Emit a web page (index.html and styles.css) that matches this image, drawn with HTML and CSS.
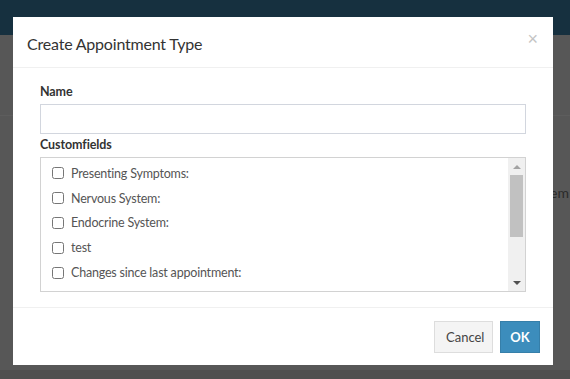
FILE: index.html
```html
<!DOCTYPE html>
<html>

	<head>
		<meta charset="UTF-8">
		<title>Appointment Types</title>
		<link rel="stylesheet" href="styles.css">
	</head>

	<body>
		<div class="page">
			<div class="topbar"></div>
			<div class="page-content">
				<div class="page-line"></div>
				<div class="page-row">Item</div>
			</div>
			<div class="page-foot"></div>
		</div>

		<div class="modal">
			<div class="modal-header">
				<h4>Create Appointment Type</h4>
				<span class="close">&times;</span>
			</div>
			<div class="modal-body">
				<label class="label">Name</label>
				<input type="text" class="input" />
				<label class="label">Customfields</label>
				<div class="list">
					<div class="items">
						<label class="item"><input type="checkbox" /> Presenting Symptoms:</label>
						<label class="item"><input type="checkbox" /> Nervous System:</label>
						<label class="item"><input type="checkbox" /> Endocrine System:</label>
						<label class="item"><input type="checkbox" /> test</label>
						<label class="item"><input type="checkbox" /> Changes since last appointment:</label>
					</div>
					<div class="scrollbar">
						<div class="arrow up"></div>
						<div class="track">
							<div class="thumb"></div>
						</div>
						<div class="arrow down"></div>
					</div>
				</div>
			</div>
			<div class="modal-footer">
				<button class="btn btn-default">Cancel</button>
				<button class="btn btn-primary">OK</button>
			</div>
		</div>
	</body>

</html>
```

FILE: styles.css
```css
* {
	margin: 0;
	box-sizing: border-box;
}

body {
	font-family: "Source Sans Pro", Lato, "Liberation Sans", sans-serif;
	font-size: 14px;
	color: #333;
	background: #575757;
	overflow: hidden;
}

.page {
	height: 379px;
	display: flex;
	flex-direction: column;
}

.topbar {
	height: 35px;
	background: #16303f;
}

.page-content {
	flex: 1;
	background: #575757;
}

.page-line {
	height: 1px;
	margin-top: 80px;
	background: #5d5d5d;
}

.page-row {
	margin-top: 68px;
	text-align: right;
	margin-right: 1px;
	color: #2a2a2a;
	font-size: 14px;
}

.page-foot {
	height: 9px;
	background: #4f4f4f;
}

.modal {
	position: absolute;
	top: 17px;
	left: 13px;
	width: 540px;
	height: 348px;
	background: #fff;
	display: flex;
	flex-direction: column;
}

.modal-header {
	height: 51px;
	padding: 0 15px 0 14px;
	border-bottom: 1px solid #f0f0f0;
	display: flex;
	align-items: center;
	justify-content: space-between;
}

.modal-header h4 {
	font-size: 16px;
	letter-spacing: -0.2px;
	font-weight: normal;
	color: #333;
	padding-top: 2px;
}

.close {
	font-size: 18px;
	color: #c4c4c4;
	margin-top: -6px;
	font-family: "Liberation Sans", sans-serif;
}

.modal-body {
	flex: 1;
	padding: 15px 27px 0 27px;
	display: flex;
	flex-direction: column;
}

.label {
	font-weight: bold;
	font-size: 12.5px;
	letter-spacing: -0.1px;
	color: #333;
	line-height: 18px;
}

.input {
	height: 30px;
	margin-top: 3px;
	margin-bottom: 2px;
	border: 1px solid #d2d6de;
	width: 486px;
}

.list {
	margin-top: 3px;
	width: 486px;
	height: 135px;
	border: 1px solid #d2d2d2;
	display: flex;
}

.items {
	flex: 1;
	padding: 3px 0 0 11px;
	display: flex;
	flex-direction: column;
}

.item {
	height: 24.8px;
	display: flex;
	align-items: center;
	gap: 5px;
	font-size: 12.5px;
	letter-spacing: -0.2px;
	color: #555;
}

.item input {
	width: 12px;
	height: 12px;
	margin: 0 2px 0 0;
}

.scrollbar {
	width: 17px;
	background: #f0f0f0;
	display: flex;
	flex-direction: column;
}

.arrow {
	height: 17px;
	display: flex;
	align-items: center;
	justify-content: center;
}

.arrow.up::before {
	content: "";
	border-left: 4px solid transparent;
	border-right: 4px solid transparent;
	border-bottom: 4px solid #a3a3a3;
}

.arrow.down::before {
	content: "";
	border-left: 4px solid transparent;
	border-right: 4px solid transparent;
	border-top: 4px solid #505050;
}

.track {
	flex: 1;
	padding: 0 2px;
}

.thumb {
	height: 62px;
	background: #c1c1c1;
}

.modal-footer {
	height: 58px;
	border-top: 1px solid #f0f0f0;
	padding: 0 13px;
	display: flex;
	justify-content: flex-end;
	align-items: center;
	gap: 7px;
}

.btn {
	height: 32px;
	font-family: inherit;
	font-size: 13px;
	padding: 0 11px;
	border: 1px solid #ddd;
	border-radius: 0;
}

.btn-default {
	background: #f4f4f4;
	color: #444;
	width: 59px;
}

.btn-primary {
	background: #3c8dbc;
	border-color: #367fa9;
	color: #fff;
	font-weight: bold;
	width: 40px;
	padding: 0;
}
```
